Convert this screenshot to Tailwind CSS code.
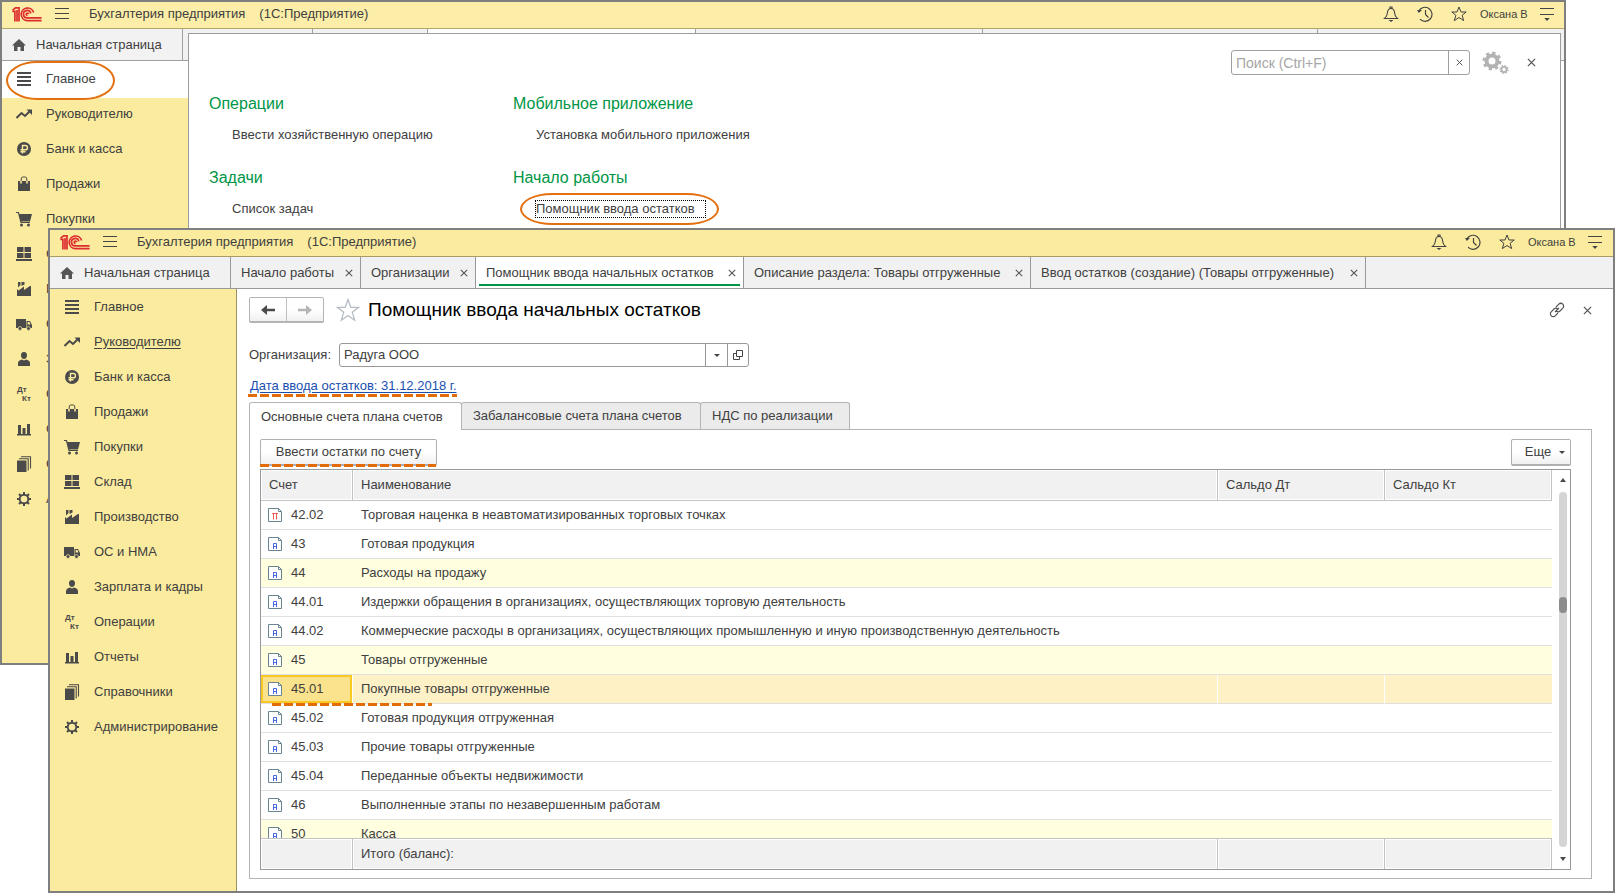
<!DOCTYPE html>
<html lang="ru">
<head>
<meta charset="utf-8">
<title>Бухгалтерия предприятия</title>
<script src="https://cdn.jsdelivr.net/npm/@tailwindcss/browser@4"></script>
</head>
<body class="bg-white">
<svg class="hidden" aria-hidden="true">
  <symbol id="logo" viewBox="0 0 30 15"><g fill="none" stroke="#dd2c2f" stroke-width="1.7"><path d="M.3 4.4h2.6V14.5M.6 3.2 3.6.9H7V14.5M5 3v11.5"/><path d="M21.6 5.6A6.3 6.3 0 1 0 15.4 13.6H29.6"/><path d="M18.8 6.4A3.7 3.7 0 1 0 15.4 10.9H29.6"/><path d="M16.6 7.2A1.2 1.2 0 1 0 15.6 8.4"/></g></symbol>
  <symbol id="burger" viewBox="0 0 14 12"><path d="M0 .5h14M0 5.500h14M0 10.500h14" stroke="#444" stroke-width="1"/></symbol>
  <symbol id="bell" viewBox="0 0 16 16"><path d="M1.5 12.5h13c-2-1.500-2.800-3.200-3-6C11.300 4 10.300 2.500 8 2.500S4.700 4 4.500 6.500c-.2 2.800-1 4.500-3 6zM7 2.300V1h2v1.300" fill="none" stroke="#444" stroke-width="1.100"/><path d="M5.500 14h5L8 16z" fill="#444"/></symbol>
  <symbol id="history" viewBox="0 0 16 16"><path d="M1.800 5A7 7 0 1 1 3 13.200M8.500 4v4.500l3 3" fill="none" stroke="#444" stroke-width="1.200"/><path d="M0 4h5L1.800 7z" fill="#444"/></symbol>
  <symbol id="star" viewBox="0 0 16 16"><path d="M8 1l2 5h5.200l-4.100 3.300 1.600 5.300L8 11.500l-4.700 3.100 1.600-5.300L.8 6H6z" fill="none" stroke="currentColor" stroke-width="1"/></symbol>
  <symbol id="menu" viewBox="0 0 14 14"><path d="M0 1.500h14M0 7.500h14" stroke="#444" stroke-width="1"/><path d="M4.300 11h5.400L7 14z" fill="#444"/></symbol>
  <symbol id="cross" viewBox="0 0 8 8"><path d="M.8.8l6.400 6.400M7.200.8L.8 7.200" stroke="#555" stroke-width="1.100"/></symbol>
  <symbol id="home" viewBox="0 0 14 12"><path d="M7 0l7 6.500h-2V12H8.500V8h-3v4H2V6.500H0z" fill="#555"/></symbol>
  <symbol id="i0" viewBox="0 0 16 16"><path d="M1 1h14v2H1zM1 5h14v2H1zM1 9h14v2H1zM1 13h14v2H1z" fill="#4a4a4a"/></symbol>
  <symbol id="i1" viewBox="0 0 16 16"><path d="M.5 12l5-5L9 10l5-5" fill="none" stroke="#4a4a4a" stroke-width="2"/><path d="M10.500 3.500H16V9z" fill="#4a4a4a"/></symbol>
  <symbol id="i2" viewBox="0 0 16 16"><circle cx="8" cy="8" r="7" fill="#4a4a4a"/><path d="M6.500 12.500V4.500h2.800a2 2 0 0 1 0 4.300H4.500M4.500 10.700h5" fill="none" stroke="#fbeb9e" stroke-width="1.400"/></symbol>
  <symbol id="i3" viewBox="0 0 16 16"><path d="M2 5h12v10H2z" fill="#4a4a4a"/><path d="M5 7.500V3q0-2 1.500-2h3Q11 1 11 3v4.500" fill="none" stroke="#fbeb9e" stroke-width="1.600"/><path d="M5.200 5V3q0-2 1.500-2h2.600q1.500 0 1.500 2v2" fill="none" stroke="#4a4a4a" stroke-width="1"/></symbol>
  <symbol id="i4" viewBox="0 0 16 16"><path d="M0 1.500h2.500L5 11.500h9" fill="none" stroke="#4a4a4a" stroke-width="1.200"/><path d="M3 3h13l-2 7.500H4.800z" fill="#4a4a4a"/><circle cx="5.500" cy="14" r="1.500" fill="#4a4a4a"/><circle cx="12.500" cy="14" r="1.500" fill="#4a4a4a"/></symbol>
  <symbol id="i5" viewBox="0 0 16 16"><path d="M1 1h6.500v5H1zM8.500 1H15v5H8.500zM1 7h6.500v5H1zM8.500 7H15v5H8.500zM0 13h16v2H0z" fill="#4a4a4a"/></symbol>
  <symbol id="i6" viewBox="0 0 16 16"><path d="M1 15V8l1.500 1.500L8 5.500V9l6-4h1v10zM2 1h2.500v3L2 6.500zM5.500 1h3v2.500l-3 1.500z" fill="#4a4a4a"/></symbol>
  <symbol id="i7" viewBox="0 0 16 16"><path d="M0 3h10v9H0zM10.500 5H14l2 4v3h-5.500z" fill="#4a4a4a"/><path d="M11.700 6h1.800l1 2.500h-2.800z" fill="#fbeb9e"/><circle cx="4" cy="12.500" r="1.900" fill="#4a4a4a" stroke="#fbeb9e" stroke-width=".7"/><circle cx="12.500" cy="12.500" r="1.900" fill="#4a4a4a" stroke="#fbeb9e" stroke-width=".7"/></symbol>
  <symbol id="i8" viewBox="0 0 16 16"><path d="M8 1c2.200 0 3 1.500 3 3.500S9.500 8 8 8 5 6.500 5 4.500 5.800 1 8 1zM2 15v-3c0-2 2-3 4-3.500l2 1 2-1c2 .5 4 1.500 4 3.500v3z" fill="#4a4a4a"/></symbol>
  <symbol id="i9" viewBox="0 0 16 16"><text x="1" y="6" font-size="8" font-weight="700" fill="#4a4a4a" font-family="Liberation Sans">Дт</text><text x="6" y="15" font-size="8" font-weight="700" fill="#4a4a4a" font-family="Liberation Sans">Кт</text></symbol>
  <symbol id="i10" viewBox="0 0 16 16"><path d="M1 13h14v1.500H1zM2 4h3v9H2zM6.500 7h3v6h-3zM11 3h3v10h-3z" fill="#4a4a4a"/></symbol>
  <symbol id="i11" viewBox="0 0 16 16"><path d="M1 4.500h9.500V16H1z" fill="#4a4a4a"/><path d="M3 2.800h9.200V14.500M5 .8h9.500V12.500" fill="none" stroke="#4a4a4a" stroke-width="1.100"/></symbol>
  <symbol id="i12" viewBox="0 0 16 16"><circle cx="8" cy="8" r="4.300" fill="none" stroke="#4a4a4a" stroke-width="1.900"/><path d="M8 1v3M8 12v3M1 8h3M12 8h3M3 3l2 2M11 11l2 2M13 3l-2 2M5 11l-2 2" stroke="#4a4a4a" stroke-width="2"/></symbol>
  <symbol id="doc" viewBox="0 0 14 14"><path d="M.5.5h10L13.500 3.500v10H.5z" fill="#fff" stroke="#6a8592"/><path d="M10.500.5v3h3" fill="none" stroke="#6a8592"/></symbol>
</svg>

<main class="relative h-screen min-h-[640px] overflow-hidden font-['Liberation_Sans',Arial,sans-serif] text-[13px] leading-4 text-[#404040]">

  <section class="absolute top-0 left-0 right-[50px] bottom-[230px] flex flex-col border-2 border-[#7f7f7f] bg-white" aria-label="Окно «Главное»">
    <header data-titlebar class="flex h-[27px] shrink-0 items-center border-b border-[#b5a76a] bg-[#fceea8] px-[10px] pb-[2px]"></header>
    <div class="flex h-8 shrink-0 border-b border-[#a0a0a0] bg-[#f2f2f2]">
      <button class="flex w-[181px] items-center gap-[10px] border-r border-[#a0a0a0] pl-[10px]"><svg class="h-3 w-[14px]"><use href="#home"/></svg>Начальная страница</button>
      <span class="w-[130px] border-r border-[#a0a0a0]"></span><span class="w-[115px] border-r border-[#a0a0a0]"></span><span class="w-[268px] border-r border-[#a0a0a0] bg-white"></span><span class="w-[287px] border-r border-[#a0a0a0]"></span><span class="w-[335px] border-r border-[#a0a0a0]"></span>
    </div>
    <div class="flex min-h-0 flex-1">
      <nav data-nav="main" class="w-[187px] shrink-0 overflow-hidden border-r border-[#989264] bg-[#fbeb9e]"></nav>
    </div>
    <div class="absolute top-[31px] right-[3px] bottom-0 left-[186px] border border-b-0 border-[#9c9c9c] bg-white">
      <div class="flex items-center justify-end pt-4 pr-6">
        <div class="flex h-[25px] w-[239px] rounded-[3px] border border-[#a0a0a0]">
          <input aria-label="Поиск" placeholder="Поиск (Ctrl+F)" class="min-w-0 flex-1 px-1 text-sm outline-none placeholder:text-[#a6a6a6]">
          <button aria-label="Очистить" class="flex w-[21px] items-center justify-center border-l border-[#a0a0a0]"><svg class="size-[7px]"><use href="#cross"/></svg></button>
        </div>
        <button aria-label="Настройки" class="ml-3"><svg class="h-6 w-[27px]" viewBox="0 0 27 24" fill="none" stroke="#b3b3b3"><circle cx="10" cy="10" r="5.500" stroke-width="4"/><circle cx="10" cy="10" r="8" stroke-width="3" stroke-dasharray="3.140 3.140"/><circle cx="22" cy="18.500" r="2.600" stroke-width="1.800"/><circle cx="22" cy="18.500" r="3.900" stroke-width="1.400" stroke-dasharray="1.530 1.530"/></svg></button>
        <button aria-label="Закрыть" class="ml-[18px]"><svg class="size-[9px]"><use href="#cross"/></svg></button>
      </div>
      <div class="grid grid-cols-[304px_auto] justify-start gap-y-[23px] pt-[13px] pl-5">
        <div><h2 class="pt-1 text-base leading-6 text-[#009646]">Операции</h2><a href="#" class="mt-[11px] ml-[23px] block">Ввести хозяйственную операцию</a></div>
        <div><h2 class="pt-1 text-base leading-6 text-[#009646]">Мобильное приложение</h2><a href="#" class="mt-[11px] ml-[23px] block">Установка мобильного приложения</a></div>
        <div><h2 class="text-base leading-6 text-[#009646]">Задачи</h2><a href="#" class="mt-[11px] ml-[23px] block">Список задач</a></div>
        <div><h2 class="text-base leading-6 text-[#009646]">Начало работы</h2>
          <a href="#" class="relative mt-[10px] ml-[22px] block w-[171px] border border-dotted border-black leading-4">Помощник ввода остатков<span class="absolute -top-2 -right-[14px] -bottom-2 -left-4 rounded-[34px/17px] border-2 border-[#e4700f]"></span></a></div>
      </div>
    </div>
    <span class="pointer-events-none absolute top-[59px] left-1 h-[39px] w-[109px] rounded-[32px/20px] border-2 border-[#e4700f]"></span>
  </section>

  <section class="absolute top-[228px] right-[1px] bottom-[2px] left-12 flex flex-col border-2 border-[#7f7f7f] bg-white" aria-label="Окно «Помощник ввода начальных остатков»">
    <header data-titlebar class="flex h-[27px] shrink-0 items-center border-b border-[#aa9d63] bg-[#fbeb9e] pr-[11px] pb-[2px] pl-[10px]"></header>
    <div class="flex h-8 shrink-0 border-b border-[#989898] bg-[#f1f1f1]">
      <button class="flex w-[181px] items-center gap-[10px] border-r border-[#989898] pl-[10px]"><svg class="h-3 w-[14px]"><use href="#home"/></svg>Начальная страница</button>
      <button class="flex w-[130px] items-center justify-between border-r border-[#989898] pr-[7px] pl-[10px]">Начало работы<svg class="size-2"><use href="#cross"/></svg></button>
      <button class="flex w-[115px] items-center justify-between border-r border-[#989898] pr-[7px] pl-[10px]">Организации<svg class="size-2"><use href="#cross"/></svg></button>
      <button class="relative flex w-[268px] items-center justify-between border-r border-[#989898] bg-white pr-[7px] pl-[10px]">Помощник ввода начальных остатков<svg class="size-2"><use href="#cross"/></svg><span class="absolute right-[3px] bottom-[2px] left-[3px] h-[2px] bg-[#009646]"></span></button>
      <button class="flex w-[287px] items-center justify-between border-r border-[#989898] pr-[7px] pl-[10px]">Описание раздела: Товары отгруженные<svg class="size-2"><use href="#cross"/></svg></button>
      <button class="flex w-[335px] items-center justify-between border-r border-[#989898] pr-[7px] pl-[10px]">Ввод остатков (создание) (Товары отгруженные)<svg class="size-2"><use href="#cross"/></svg></button>
    </div>
    <div class="flex min-h-0 flex-1">
      <nav data-nav="front" class="w-[187px] shrink-0 overflow-hidden border-r border-[#989264] bg-[#fbeb9e]"></nav>
      <div class="flex min-w-0 flex-1 flex-col pt-2 pr-[21px] pb-3 pl-3">
        <div class="flex h-[26px] items-center">
          <div class="flex h-[26px] w-[75px] rounded-[2px] border border-b-2 border-[#b4b4b4] bg-linear-to-b from-white from-50% to-[#f0f0f0]">
            <button aria-label="Назад" class="flex flex-1 items-center justify-center border-r border-[#c0c0c0]"><svg class="h-[10px] w-[14px]" viewBox="0 0 14 10"><path d="M0 5l6-5v3.800h8v2.400H6V10z" fill="#4a4a4a"/></svg></button>
            <button aria-label="Вперёд" class="flex flex-1 items-center justify-center"><svg class="h-[10px] w-[14px]" viewBox="0 0 14 10"><path d="M14 5L8 0v3.800H0v2.400h8V10z" fill="#b5b5b5"/></svg></button>
          </div>
          <button aria-label="В избранное" class="ml-3 text-[#b3bac2]"><svg class="size-6" viewBox="0 0 24 24"><path d="M12 1.500l2.800 7.800h7.700l-6.200 4.900 2.400 8L12 17.400l-6.700 4.800 2.400-8L1.500 9.300h7.700z" fill="none" stroke="currentColor" stroke-width="1.200"/></svg></button>
          <h1 class="ml-2 flex-1 text-[19px] leading-6 text-black">Помощник ввода начальных остатков</h1>
          <button aria-label="Ссылка"><svg class="size-4" viewBox="0 0 16 16" fill="none" stroke="#555" stroke-width="1.200"><path d="M7 5l2.800-2.800a2.800 2.800 0 0 1 4 4L11 9a2.800 2.800 0 0 1-3.500.3M9 11l-2.800 2.800a2.800 2.800 0 0 1-4-4L5 7a2.800 2.800 0 0 1 3.500-.3M6 10l4-4"/></svg></button>
          <button aria-label="Закрыть" class="ml-[18px]"><svg class="size-[9px]"><use href="#cross"/></svg></button>
        </div>
        <div class="mt-5 flex h-6 items-center">
          <label for="org" class="w-[90px]">Организация:</label>
          <div class="flex h-6 w-[410px] rounded-[3px] border border-[#989898]">
            <input id="org" value="Радуга ООО" class="min-w-0 flex-1 px-1 outline-none">
            <button aria-label="Выбрать" class="flex w-[22px] items-center justify-center border-l border-[#989898]"><svg class="h-[3px] w-[6px]" viewBox="0 0 6 3"><path d="M0 0h6L3 3z" fill="#444"/></svg></button>
            <button aria-label="Открыть" class="flex w-[21px] items-center justify-center border-l border-[#989898]"><svg class="size-[10px]" viewBox="0 0 10 10" fill="none" stroke="#444"><path d="M3.500.5h6v6h-6zM3.500 3.500h-3v6h6v-3"/></svg></button>
          </div>
        </div>
        <div class="mt-[11px] flex"><a href="#" class="relative ml-[1px] text-[#1a4fb0] underline underline-offset-2">Дата ввода остатков: 31.12.2018 г.<span class="absolute right-0 -bottom-[3px] -left-[2px] h-[3px] bg-[repeating-linear-gradient(90deg,#e36c0a_0_9px,transparent_9px_12px)]"></span></a></div>
        <div role="tablist" class="mt-2 flex h-[27px] shrink-0">
          <button role="tab" aria-selected="true" class="z-10 -mb-px w-[213px] rounded-t-[3px] border border-b-0 border-[#b4b4b4] bg-white pl-[11px] text-left">Основные счета плана счетов</button>
          <button role="tab" class="-ml-px w-[240px] rounded-t-[3px] border border-b-0 border-[#b4b4b4] bg-[#ebebeb] pl-[11px] text-left">Забалансовые счета плана счетов</button>
          <button role="tab" class="-ml-px w-[150px] rounded-t-[3px] border border-b-0 border-[#b4b4b4] bg-[#ebebeb] pl-[11px] text-left">НДС по реализации</button>
        </div>
        <div class="flex min-h-0 flex-1 flex-col border border-[#b4b4b4] pt-[9px] pr-5 pb-2 pl-[10px]">
          <div class="flex shrink-0 justify-between">
            <button class="relative h-[27px] w-[177px] rounded-[2px] border border-b-2 border-[#b0b0b0] bg-linear-to-b from-white from-50% to-[#f0f0f0]">Ввести остатки по счету<span class="absolute right-0 -bottom-[3px] -left-px h-[3px] bg-[repeating-linear-gradient(90deg,#e36c0a_0_9px,transparent_9px_12px)]"></span></button>
            <button class="flex h-[27px] w-[60px] items-center justify-center gap-2 rounded-[2px] border border-b-2 border-[#b0b0b0] bg-linear-to-b from-white from-50% to-[#f0f0f0] pl-2">Еще<svg class="h-[3px] w-[6px]" viewBox="0 0 6 3"><path d="M0 0h6L3 3z" fill="#444"/></svg></button>
          </div>
          <div class="mt-[3px] flex min-h-0 flex-1 border border-[#989898]">
            <div class="flex min-w-0 flex-1 flex-col">
              <div class="min-h-0 flex-1 overflow-hidden">
                <table class="w-full table-fixed border-separate border-spacing-0 text-left">
                  <colgroup><col class="w-[92px]"><col><col class="w-[167px]"><col class="w-[167px]"></colgroup>
                  <thead><tr class="h-[31px] bg-[#f1f1f1]">
                    <th class="border-r border-b border-[#c4c4c4] pl-2 font-normal shadow-[inset_0_0_0_1px_#fff]">Счет</th>
                    <th class="border-r border-b border-[#c4c4c4] pl-2 font-normal shadow-[inset_0_0_0_1px_#fff]">Наименование</th>
                    <th class="border-r border-b border-[#c4c4c4] pl-2 font-normal shadow-[inset_0_0_0_1px_#fff]">Сальдо Дт</th>
                    <th class="border-r border-b border-[#c4c4c4] pl-2 font-normal shadow-[inset_0_0_0_1px_#fff]">Сальдо Кт</th>
                  </tr></thead>
                  <tbody id="rows"></tbody>
                </table>
              </div>
              <table class="w-full shrink-0 table-fixed border-separate border-spacing-0 text-left">
                <colgroup><col class="w-[92px]"><col><col class="w-[167px]"><col class="w-[167px]"></colgroup>
                <tbody><tr class="h-[31px] bg-[#f1f1f1]">
                  <td class="border-t border-r border-[#c4c4c4] shadow-[inset_0_0_0_1px_#fff]"></td>
                  <td class="border-t border-r border-[#c4c4c4] pl-2 shadow-[inset_0_0_0_1px_#fff]">Итого (баланс):</td>
                  <td class="border-t border-r border-[#c4c4c4] shadow-[inset_0_0_0_1px_#fff]"></td>
                  <td class="border-t border-r border-[#c4c4c4] shadow-[inset_0_0_0_1px_#fff]"></td>
                </tr></tbody>
              </table>
            </div>
            <div class="flex w-[18px] shrink-0 flex-col items-center pt-2 pb-2 pl-1">
              <svg class="h-1 w-[6px]" viewBox="0 0 6 4"><path d="M0 4h6L3 0z" fill="#4a4a4a"/></svg>
              <div class="my-[10px] flex w-2 flex-1 flex-col rounded-full bg-[#d5d5d5] pt-[105px]"><div class="h-4 rounded-full bg-[#8c8c8c]"></div></div>
              <svg class="h-1 w-[6px]" viewBox="0 0 6 4"><path d="M0 0h6L3 4z" fill="#4a4a4a"/></svg>
            </div>
          </div>
        </div>
      </div>
    </div>
  </section>
</main>

<script>
const titlebar = `
  <svg class="h-[15px] w-[30px] shrink-0"><use href="#logo"/></svg>
  <button aria-label="Меню" class="ml-[13px]"><svg class="h-3 w-[14px]"><use href="#burger"/></svg></button>
  <span class="ml-5">Бухгалтерия предприятия</span><span class="ml-[14px] flex-1">(1С:Предприятие)</span>
  <button aria-label="Уведомления"><svg class="size-4"><use href="#bell"/></svg></button>
  <button aria-label="История" class="ml-[18px]"><svg class="size-4"><use href="#history"/></svg></button>
  <button aria-label="Избранное" class="ml-[18px]"><svg class="size-4"><use href="#star"/></svg></button>
  <span class="ml-[13px] w-[60px] text-[11px]">Оксана В</span>
  <button aria-label="Сервис"><svg class="size-[14px]"><use href="#menu"/></svg></button>`;
document.querySelectorAll('[data-titlebar]').forEach(e => e.innerHTML = titlebar);

const sections = ['Главное','Руководителю','Банк и касса','Продажи','Покупки','Склад','Производство','ОС и НМА','Зарплата и кадры','Операции','Отчеты','Справочники','Администрирование'];
document.querySelectorAll('[data-nav]').forEach(nav => {
  const back = nav.dataset.nav === 'main';
  nav.innerHTML = sections.map((s, i) => `<a href="#" class="flex h-[35px] items-center gap-[14px] pl-[14px] whitespace-nowrap ${back && !i ? 'bg-white shadow-[0_2px_0_#fff]' : ''}"><svg class="size-4 shrink-0"><use href="#i${i}"/></svg><span class="${!back && i === 1 ? 'underline underline-offset-2' : ''}">${s}</span></a>`).join('');
});

const rows = [['42.02','Торговая наценка в неавтоматизированных торговых точках'],['43','Готовая продукция'],['44','Расходы на продажу',1],['44.01','Издержки обращения в организациях, осуществляющих торговую деятельность'],['44.02','Коммерческие расходы в организациях, осуществляющих промышленную и иную производственную деятельность'],['45','Товары отгруженные',1],['45.01','Покупные товары отгруженные',2],['45.02','Готовая продукция отгруженная'],['45.03','Прочие товары отгруженные'],['45.04','Переданные объекты недвижимости'],['46','Выполненные этапы по незавершенным работам'],['50','Касса',1]];
document.getElementById('rows').innerHTML = rows.map(([code, name, kind], i) => {
  const bg = kind === 1 ? 'bg-[#fffedf]' : kind === 2 ? 'bg-[#fef1c5]' : 'bg-white';
  const line = kind === 2 ? 'border-r border-r-white' : '';
  const dash = kind === 2 ? '<span class="absolute left-[11px] -bottom-[3px] z-10 h-[3px] w-[160px] bg-[repeating-linear-gradient(90deg,#e36c0a_0_9px,transparent_9px_12px)]"></span>' : '';
  const cell = kind === 2 ? 'bg-[#fbe38d] shadow-[inset_0_0_0_2px_#f9c822]' : '';
  const mark = i ? '<path d="M5.500 12V6.500h3V12M5.500 9.500h3" fill="none" stroke="#4668e0"/>' : '<path d="M4 5.500h6M5.500 5.500v6M8.500 5.500v6" fill="none" stroke="#ee5a52"/>';
  return `<tr class="h-[29px] ${bg}"><td class="relative border-b border-[#e0e0e0] ${line} ${cell}"><div class="flex items-center gap-[9px] pl-[7px]"><svg class="size-[14px]" viewBox="0 0 14 14"><use href="#doc"/>${mark}</svg>${code}</div>${dash}</td><td class="border-b border-[#e0e0e0] ${line} pl-2 whitespace-nowrap">${name}</td><td class="border-b border-[#e0e0e0] ${line}"></td><td class="border-b border-[#e0e0e0]"></td></tr>`;
}).join('');
</script>
</body>
</html>
